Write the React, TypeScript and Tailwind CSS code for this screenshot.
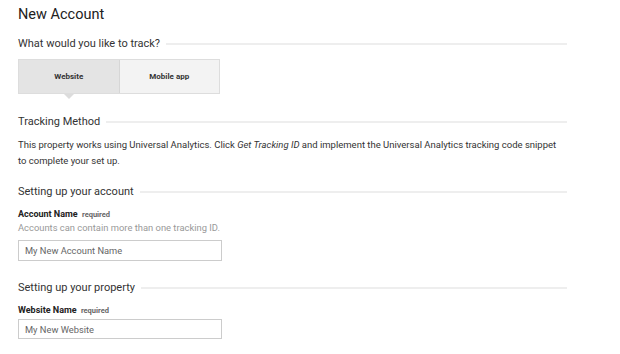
import React from "react";

function SectionHeader({ title, className }: { title: string; className?: string }) {
  return (
    <div className={`flex items-center gap-[6px] w-[549px] ${className ?? ""}`}>
      <h2 className="text-[11px] leading-[16px] text-[#333333] whitespace-nowrap">{title}</h2>
      <div className="flex-1 h-[2px] bg-[#eeeeee]" />
    </div>
  );
}

function FieldLabel({ label }: { label: string }) {
  return (
    <p className="text-[9px] leading-[14px] text-[#222222] font-bold">
      {label} <span className="text-[7.5px] font-bold text-[#666666] ml-[2px]">required</span>
    </p>
  );
}

export default function App() {
  return (
    <main className="w-[620px] h-[354px] overflow-hidden bg-white pt-[5px] px-[18px] font-['Roboto',sans-serif]">
      <h1 className="text-[14.5px] leading-[20px] text-[#212121]">New Account</h1>

      <SectionHeader title="What would you like to track?" className="mt-[11px]" />
      <div className="mt-[7px] flex w-[202px] h-[35px] border border-[#dddddd] text-[8px] font-bold text-[#333333]">
        <div className="relative flex-1 flex items-center justify-center bg-[#e4e4e4] border-r border-[#d6d6d6]">
          Website
          <span className="absolute left-1/2 -translate-x-1/2 -bottom-[6px] w-0 h-0 border-l-[5px] border-r-[5px] border-t-[5px] border-l-transparent border-r-transparent border-t-[#dcdcdc]" />
        </div>
        <div className="flex-1 flex items-center justify-center bg-[#f3f3f3]">Mobile app</div>
      </div>

      <SectionHeader title="Tracking Method" className="mt-[20px]" />
      <p className="mt-[7px] w-[548px] text-[9.5px] leading-[16px] text-[#333333]">
        This property works using Universal Analytics. Click <em>Get Tracking ID</em> and implement the Universal Analytics tracking code snippet to complete your set up.
      </p>

      <SectionHeader title="Setting up your account" className="mt-[15px]" />
      <div className="mt-[7px]">
        <FieldLabel label="Account Name" />
        <p className="text-[9.4px] leading-[12px] text-[#999999]">Accounts can contain more than one tracking ID.</p>
        <input
          className="block mt-[6px] w-[204px] h-[21px] border border-[#cccccc] px-[6px] text-[9.3px] text-[#333333] placeholder:text-[#666666] outline-none"
          placeholder="My New Account Name"
        />
      </div>

      <SectionHeader title="Setting up your property" className="mt-[19px]" />
      <div className="mt-[7px]">
        <FieldLabel label="Website Name" />
        <input
          className="block mt-[1px] w-[204px] h-[20px] border border-[#cccccc] px-[6px] text-[9.3px] text-[#333333] placeholder:text-[#666666] outline-none"
          placeholder="My New Website"
        />
      </div>
    </main>
  );
}
